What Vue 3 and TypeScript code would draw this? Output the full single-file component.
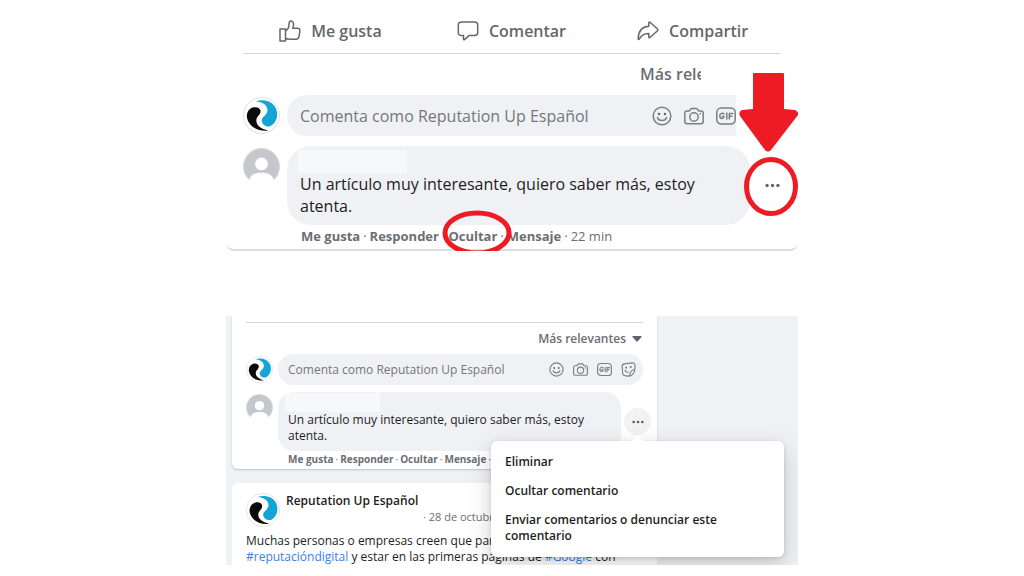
<script setup lang="ts">
interface Action {
  label: string
  icon: string
}

const actions: Action[] = [
  { label: 'Me gusta', icon: 'like' },
  { label: 'Comentar', icon: 'comment' },
  { label: 'Compartir', icon: 'share' },
]

const links: string[] = ['Me gusta', 'Responder', 'Ocultar', 'Mensaje']
const tools: string[] = ['smile', 'camera', 'gif']
const toolsFull: string[] = ['smile', 'camera', 'gif', 'sticker']
const toolNames: Record<string, string> = {
  smile: 'Emoji',
  camera: 'Foto',
  gif: 'GIF',
  sticker: 'Sticker',
}
const menu: string[] = [
  'Eliminar',
  'Ocultar comentario',
  'Enviar comentarios o denunciar este comentario',
]
</script>

<template>
  <svg class="defs" aria-hidden="true">
    <symbol id="i-like" viewBox="0 0 22 22">
      <path d="M1 9h5.500v12H1zM6.500 11C9 9.500 10 7 10 4.500C10 2.500 10.300 1 11.800 1C14 1 14.800 3 14.500 5.200C14.400 6.500 14 7.500 13.700 8.200H18.500C20.200 8.200 21 9.300 20.900 10.800L20 16.500C19.700 18.300 18.600 19.300 17 19.300H11C9.300 19.300 8 18.800 6.500 18.200" />
    </symbol>
    <symbol id="i-comment" viewBox="0 0 22 22">
      <path d="M4.500 2H17.500C19.500 2 20.700 3.200 20.700 5V12.500C20.700 14.400 19.500 15.600 17.500 15.600H12L7.500 19.600C7 20 6.500 19.800 6.500 19.200V15.600H4.500C2.500 15.600 1.300 14.400 1.300 12.500V5C1.300 3.200 2.500 2 4.500 2Z" />
    </symbol>
    <symbol id="i-share" viewBox="0 0 22 22">
      <path d="M13 2.300L20.500 9C21 9.500 21 10.300 20.500 10.800L13 17.500C12.400 18 11.800 17.700 11.800 17V13.500C7.500 13.300 4.500 15 2.200 19.200C1.800 19.800 1.200 19.600 1.200 19C1.300 11.500 5 6.700 11.800 6.300V2.800C11.800 2.100 12.400 1.800 13 2.300Z" />
    </symbol>
    <symbol id="i-smile" viewBox="0 0 20 20">
      <circle cx="10" cy="10" r="8.800" />
      <path d="M5.500 11.500C6.500 15.500 13.500 15.500 14.500 11.500" />
      <circle class="dot" cx="7" cy="8" r="1.200" />
      <circle class="dot" cx="13" cy="8" r="1.200" />
    </symbol>
    <symbol id="i-camera" viewBox="0 0 20 20">
      <path d="M3 5H5C6 5 6.300 2.500 7.500 2.500H12.500C13.700 2.500 14 5 15 5H17C18.300 5 19.200 5.900 19.200 7V15.500C19.200 16.800 18.300 17.700 17 17.700H3C1.700 17.700 .8 16.800 .8 15.500V7C.8 5.900 1.700 5 3 5Z" />
      <circle cx="10" cy="11" r="4.200" />
      <circle class="dot" cx="16.200" cy="7.800" r=".8" />
    </symbol>
    <symbol id="i-gif" viewBox="0 0 20 20">
      <rect x=".8" y="2" width="18.400" height="16" rx="4.500" />
      <path d="M8 8C7 6.600 3.800 7 3.800 10C3.800 13 7.600 13.400 8 10.500H6.300M10.800 7V13M13.300 13V7.500H16.800M13.300 10.200H16" />
    </symbol>
    <symbol id="i-sticker" viewBox="0 0 20 20">
      <path d="M4.500 2.500L15 1.200C17 1 18.500 2.300 18.600 4L18.500 10C18 14 15 17.500 11.500 18.800L6 18.500C3.500 18.400 2.500 17 2.200 15L1.500 6C1.400 4 2.500 2.800 4.500 2.500ZM18.500 10C14.500 10.500 11.500 13.500 11.500 18.800M5.500 11C6 13 7.500 14 9.500 13.500" />
      <circle class="dot" cx="7" cy="7.500" r="1.200" />
      <circle class="dot" cx="13" cy="6.500" r="1.200" />
    </symbol>
    <symbol id="i-logo" viewBox="0 0 36 36">
      <circle cx="18" cy="18" r="17.500" fill="#fff" stroke="#e2e3e6" />
      <path fill="#12a5d6" d="M12.500 4.200C20 1.800 28.500 4 32 11C35 18 32.500 25.500 26.500 28.500C22.500 29.500 18 26.500 18.200 22.500C18.300 19.500 24 17.500 23.800 12.500C23.500 7.500 19 5 12.500 4.200Z" />
      <path fill="#0b0b0d" d="M17 13C16.500 10.500 13 9.200 9.500 10.200C5 11.500 3 16.500 4 21C6 29 14.500 33.800 24.500 32.600C17.500 30.800 13 27.500 13 23C13 18.500 17.800 17.500 17 13Z" />
    </symbol>
    <symbol id="i-user" viewBox="0 0 36 36">
      <circle cx="18" cy="18" r="17.500" fill="#c5c7cc" stroke="#d8d9dd" />
      <circle cx="18" cy="15.500" r="6.200" fill="#fff" />
      <path fill="#fff" d="M6 31.500C7 26.500 11 24 18 24C25 24 29 26.500 30 31.500A18 18 0 0 1 6 31.500Z" />
    </symbol>
    <symbol id="i-dots" viewBox="0 0 16 16">
      <circle class="dot" cx="2.200" cy="8" r="1.800" />
      <circle class="dot" cx="8" cy="8" r="1.800" />
      <circle class="dot" cx="13.800" cy="8" r="1.800" />
    </symbol>
  </svg>

  <main class="page">
    <section class="shot large">
      <nav class="actions">
        <button v-for="a in actions" :key="a.label" type="button">
          <svg class="icon"><use :href="`#i-${a.icon}`" /></svg>{{ a.label }}
        </button>
      </nav>
      <div class="sort"><button type="button">Más relevantes</button></div>
      <div class="row">
        <svg class="avatar"><use href="#i-logo" /></svg>
        <form class="field cut" @submit.prevent>
          <input type="text" aria-label="Comentario" placeholder="Comenta como Reputation Up Español" />
          <button v-for="t in tools" :key="t" type="button" :aria-label="toolNames[t]">
            <svg class="icon"><use :href="`#i-${t}`" /></svg>
          </button>
        </form>
      </div>
      <div class="row comment">
        <svg class="avatar"><use href="#i-user" /></svg>
        <div class="bubble">
          <span class="name"></span>
          <p>Un artículo muy interesante, quiero saber más, estoy atenta.</p>
        </div>
        <button class="more" type="button" aria-label="Más opciones">
          <svg class="icon"><use href="#i-dots" /></svg>
        </button>
      </div>
      <div class="links">
        <template v-for="l in links" :key="l"><button type="button">{{ l }}</button><span>·</span></template>
        <time>22 min</time>
      </div>
      <svg class="marks" viewBox="0 0 572 251" aria-hidden="true">
        <path fill="#ed1c24" d="M528 73H557Q558 73 558 74V109L569 110Q573 112 572 115L545 150Q542 153 539 150L514 116Q512 112 516 110L527 109V74Q527 73 528 73Z" />
        <ellipse cx="545" cy="186.500" rx="24.500" ry="27" />
        <ellipse cx="251" cy="233" rx="32" ry="20" />
      </svg>
    </section>

    <section class="shot small">
      <article class="card first">
        <div class="sort">
          <button type="button">Más relevantes<svg class="caret" viewBox="0 0 10 6"><path d="M1 0H9Q10 0 9.500 1L5.500 5.500Q5 6 4.500 5.500L.5 1Q0 0 1 0Z" /></svg></button>
        </div>
        <div class="row">
          <svg class="avatar"><use href="#i-logo" /></svg>
          <form class="field" @submit.prevent>
            <input type="text" aria-label="Comentario" placeholder="Comenta como Reputation Up Español" />
            <button v-for="t in toolsFull" :key="t" type="button" :aria-label="toolNames[t]">
              <svg class="icon"><use :href="`#i-${t}`" /></svg>
            </button>
          </form>
        </div>
        <div class="row comment">
          <svg class="avatar"><use href="#i-user" /></svg>
          <div class="bubble">
            <span class="name"></span>
            <p>Un artículo muy interesante, quiero saber más, estoy atenta.</p>
          </div>
          <button class="more" type="button" aria-label="Más opciones">
            <svg class="icon"><use href="#i-dots" /></svg>
          </button>
        </div>
        <div class="links">
          <template v-for="l in links" :key="l"><button type="button">{{ l }}</button><span>·</span></template>
          <time>22 min</time>
        </div>
      </article>
      <article class="card post">
        <header>
          <svg class="avatar"><use href="#i-logo" /></svg>
          <div>
            <h2>Reputation Up Español</h2>
            <time>· 28 de octubre</time>
          </div>
        </header>
        <p>
          Muchas personas o empresas creen que para<br />
          <a href="#reputaciondigital">#reputacióndigital</a> y estar en las primeras páginas de
          <a href="#google">#Google</a> con
        </p>
      </article>
      <div class="menu" role="menu">
        <button v-for="m in menu" :key="m" type="button" role="menuitem">{{ m }}</button>
      </div>
    </section>
  </main>
</template>

<style>
body {
  margin: 0;
  background: #fff;
}
</style>

<style scoped>
.defs {
  position: absolute;
  width: 0;
  height: 0;
}
.page {
  max-width: 572px;
  margin: 0 auto;
  font-family: "Open Sans", "Noto Sans", sans-serif;
  color: #1c1e21;
}
button {
  border: 0;
  padding: 0;
  background: none;
  font: inherit;
  color: inherit;
  text-align: left;
  cursor: pointer;
}
p,
h2 {
  margin: 0;
}
svg {
  display: block;
  flex: none;
}
.icon {
  fill: none;
  stroke: #7b7e84;
  stroke-width: 1.5;
  stroke-linejoin: round;
  stroke-linecap: round;
}
.dot {
  fill: #606368;
  stroke: none;
}
.shot {
  position: relative;
  box-sizing: border-box;
}

/* shared comment pieces */
.row {
  display: flex;
}
.field {
  flex: 1;
  min-width: 0;
  display: flex;
  align-items: center;
  box-sizing: border-box;
  background: #f0f1f4;
}
.field input {
  flex: 1;
  min-width: 0;
  border: 0;
  padding: 0;
  background: none;
  font: inherit;
  outline: none;
}
.field input::placeholder {
  color: #74777c;
  opacity: 1;
}
.bubble {
  flex: 1;
  box-sizing: border-box;
  background: #f0f1f4;
}
.name {
  display: block;
  background: #f7f8fa;
}
.more {
  display: grid;
  place-items: center;
  border-radius: 50%;
}
.links {
  display: flex;
  white-space: nowrap;
  color: #6b6e73;
}
.links button {
  font-weight: 700;
}
.sort {
  display: flex;
  justify-content: flex-end;
  font-weight: 600;
  color: #6b6e73;
}

/* large view */
.large {
  padding: 8px 18px 3px 17px;
  border-bottom: 2px solid #dcdde0;
  border-radius: 0 0 8px 8px;
  font-size: 16px;
  line-height: 22px;
}
.actions {
  display: grid;
  grid-template-columns: 14fr 15fr 14fr;
  border-bottom: 1px solid #d3d5d9;
  color: #65676b;
  font-weight: 600;
}
.actions button {
  display: flex;
  align-items: center;
  justify-content: center;
  gap: 10px;
  height: 45px;
}
.actions .icon {
  width: 22px;
  height: 22px;
  stroke: #65676b;
}
.large .sort {
  padding: 9px 79px 10px 0;
}
.large .sort button {
  width: 61px;
  overflow: hidden;
  white-space: nowrap;
}
.large .row {
  gap: 7px;
}
.large .avatar {
  width: 37px;
  height: 37px;
  margin-top: 2px;
}
.large .field {
  height: 41px;
  gap: 12px;
  padding-left: 13px;
  margin-right: 44px;
}
.field.cut {
  border-radius: 20px 0 0 20px;
}
.large .field .icon {
  width: 20px;
  height: 20px;
}
.large .comment {
  margin: 10px -8px 0 0;
}
.large .bubble {
  padding: 4px 13px 8px;
  border-radius: 24px;
}
.large .name {
  width: 109px;
  height: 23px;
  margin-left: -2px;
}
.large .more {
  align-self: center;
  width: 31px;
  height: 31px;
}
.more .icon {
  width: 15px;
  height: 15px;
}
.large .links {
  padding: 1px 0 0 58px;
  gap: 3px;
  font-size: 13px;
  line-height: 20px;
}
.marks {
  position: absolute;
  top: 0;
  left: 0;
  width: 572px;
  height: 251px;
  fill: none;
  stroke: #ed1c24;
  pointer-events: none;
}
.marks path {
  stroke: none;
}
.marks ellipse {
  stroke-width: 5;
}

/* small view */
.small {
  overflow: hidden;
  margin-top: 65px;
  padding: 0 141px 0 6px;
  background: #f0f1f4;
  font-size: 12px;
  line-height: 16px;
}
.card {
  background: #fff;
  padding: 0 14px;
}
.first {
  padding-top: 6px;
  border-radius: 0 0 6px 6px;
  box-shadow: 0 1px 2px rgba(0, 0, 0, 0.2);
}
.small .sort {
  border-top: 1px solid #d3d5d9;
  padding: 8px 1px 7px 0;
}
.small .sort button {
  display: flex;
  align-items: center;
  gap: 6px;
}
.caret {
  width: 10px;
  height: 6px;
  fill: #606368;
}
.small .row {
  gap: 5px;
}
.small .avatar {
  width: 27px;
  height: 27px;
  margin-top: 2px;
}
.small .field {
  height: 31px;
  gap: 9px;
  padding: 0 7px 0 10px;
  border-radius: 16px;
}
.small .field .icon {
  width: 15px;
  height: 15px;
}
.small .comment {
  margin: 7px -8px 0 0;
}
.small .bubble {
  margin-right: -2px;
  padding: 1px 10px 7px;
  border-radius: 16px;
}
.small .name {
  width: 95px;
  height: 19px;
  margin-left: -3px;
}
.small .more {
  align-self: center;
  width: 27px;
  height: 27px;
  background: #f2f2f3;
}
.small .more .icon {
  width: 12px;
  height: 12px;
}
.small .links {
  padding-left: 42px;
  gap: 2px;
  font-size: 10px;
  padding-bottom: 2px;
}
.post {
  margin-top: 14px;
  padding-top: 10px;
  border-radius: 6px 6px 0 0;
}
.post header {
  display: flex;
  gap: 6px;
  padding-bottom: 6px;
}
.post .avatar {
  width: 34px;
  height: 34px;
  margin: 0;
}
.post h2 {
  font-size: 12px;
  font-weight: 600;
}
.post time {
  display: block;
  padding-left: 137px;
  font-size: 11px;
  color: #6b6e73;
}
.post p {
  white-space: nowrap;
}
.post a {
  color: #3b82e8;
  text-decoration: none;
}
.menu {
  position: absolute;
  top: 125px;
  right: 14px;
  width: 293px;
  box-sizing: border-box;
  display: flex;
  flex-direction: column;
  gap: 13px;
  padding: 13px 50px 13px 14px;
  border-radius: 6px;
  background: #fff;
  box-shadow: 0 8px 24px rgba(0, 0, 0, 0.18), 0 1px 4px rgba(0, 0, 0, 0.14);
  font-weight: 600;
}
.menu::before {
  content: "";
  position: absolute;
  top: -4px;
  right: 142px;
  width: 9px;
  height: 9px;
  background: #fff;
  transform: rotate(45deg);
}
</style>
